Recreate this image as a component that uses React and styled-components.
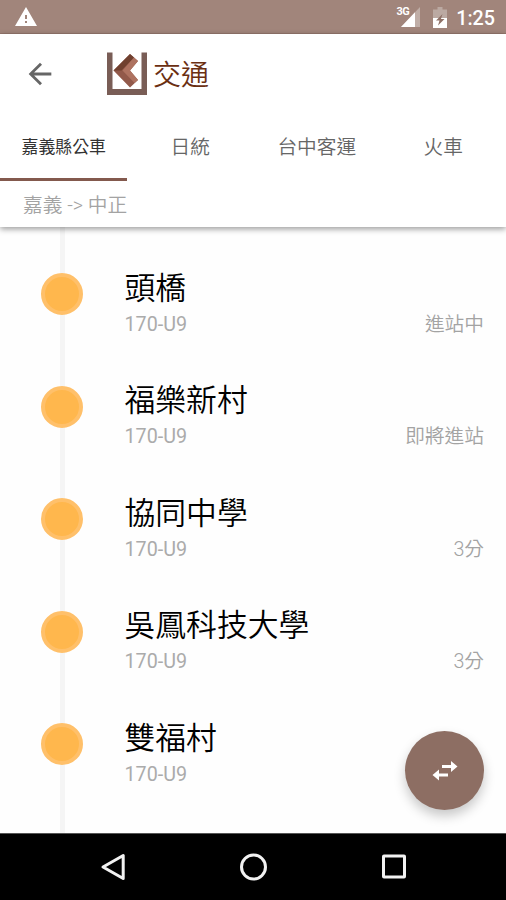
import React from "react";
import styled, { createGlobalStyle } from "styled-components";
import { MdArrowBack, MdWarning } from "react-icons/md";

const tabs = ["嘉義縣公車", "日統", "台中客運", "火車"];

const stops = [
  { name: "頭橋", bus: "170-U9", status: "進站中" },
  { name: "福樂新村", bus: "170-U9", status: "即將進站" },
  { name: "協同中學", bus: "170-U9", status: "3分" },
  { name: "吳鳳科技大學", bus: "170-U9", status: "3分" },
  { name: "雙福村", bus: "170-U9", status: "" },
];

const Logo = () => (
  <svg width="42" height="44" viewBox="0 0 42 44">
    <path d="M1 .5h5.500v36.500h29V.5H41v42.500H1z" fill="#795d56" />
    <path d="M24 2L32 9L24 18.500L32 28L24 35.500L7.500 18.500z" fill="#92594a" />
    <path d="M24 2L28 5.500L15.500 18.500H7.500z" fill="#70402f" />
    <path d="M28 5.500L32 9L24 18.500L32 28L28.500 31L16.500 18.500z" fill="#ae7260" />
  </svg>
);

const Signal = () => (
  <svg width="19" height="20" viewBox="0 0 19 20">
    <path d="M19 0v20H0z" fill="#c0aea7" />
    <path d="M14 5.300V20H0z" fill="#fff" />
  </svg>
);

const Battery = () => (
  <svg width="14" height="21" viewBox="0 0 14 21">
    <path d="M4.500 0h5v2.500H14V11H0V2.500h4.500z" fill="#bba9a2" />
    <path d="M0 11h14v10H0z" fill="#fff" />
    <path d="M9.500 7L3 13.500h3.500L5 18.500L11.500 12H8z" fill="#8f7167" />
  </svg>
);

const SwapIcon = () => (
  <svg width="26" height="20" viewBox="0 0 26 20" fill="#fff">
    <path d="M10 4h9V0l6.500 5.500L19 11V7h-9z" />
    <path d="M16 12.500H7v-4L.5 14L7 19.500v-4h9z" />
  </svg>
);

const App = () => {
  return (
    <Screen>
      <GlobalStyle />
      <StatusBar>
        <MdWarning size={24} />
        <StatusIcons>
          <Network>3G</Network>
          <Signal />
          <Battery />
          <Clock>1:25</Clock>
        </StatusIcons>
      </StatusBar>
      <Header>
        <Toolbar>
          <MdArrowBack size={34} />
          <Brand>
            <Logo />
            <h1>交通</h1>
          </Brand>
        </Toolbar>
        <Tabs>
          {tabs.map((tab, i) => (
            <Tab key={tab} $active={i === 0}>
              {tab}
            </Tab>
          ))}
        </Tabs>
        <Direction>嘉義 -&gt; 中正</Direction>
      </Header>
      <StopList>
        {stops.map((stop) => (
          <Stop key={stop.name}>
            <Track>
              <Dot />
            </Track>
            <StopInfo>
              <StopName>{stop.name}</StopName>
              <Detail>
                <span>{stop.bus}</span>
                <span>{stop.status}</span>
              </Detail>
            </StopInfo>
          </Stop>
        ))}
        <Fab>
          <SwapIcon />
        </Fab>
      </StopList>
      <NavBar>
        <svg width="28" height="30" viewBox="0 0 28 30">
          <path d="M24.200 3.500v23L4 15z" />
        </svg>
        <svg width="30" height="30" viewBox="0 0 30 30">
          <circle cx="14.500" cy="15" r="12" />
        </svg>
        <svg width="28" height="30" viewBox="0 0 28 30">
          <rect x="3.500" y="4" width="21" height="21" rx="0.500" />
        </svg>
      </NavBar>
    </Screen>
  );
};

export default App;

const GlobalStyle = createGlobalStyle`
  body {
    margin: 0;
    font-family: Roboto, "Noto Sans CJK TC", sans-serif;
  }
  * {
    box-sizing: border-box;
  }
  svg {
    display: block;
    flex-shrink: 0;
  }
`;

const Screen = styled.div`
  display: flex;
  flex-direction: column;
  width: 506px;
  height: 900px;
  overflow: hidden;
  background: #fefefe;
`;

const StatusBar = styled.div`
  display: flex;
  align-items: center;
  justify-content: space-between;
  height: 34px;
  padding: 1px 11px 0 14px;
  background: #a1857b;
  border-bottom: 1px solid #94766c;
  color: #fff;
`;

const StatusIcons = styled.div`
  display: flex;
  align-items: center;
  svg + svg {
    margin-left: 13px;
  }
`;

const Network = styled.span`
  align-self: flex-start;
  margin-right: -8px;
  font-size: 11px;
  line-height: 16px;
  font-weight: 700;
  letter-spacing: -0.5px;
`;

const Clock = styled.span`
  margin-left: 9px;
  padding-top: 3px;
  font-size: 19.7px;
  font-weight: 500;
  line-height: 24px;
`;

const Header = styled.div`
  position: relative;
  z-index: 1;
  height: 193px;
  background: #fff;
  box-shadow: 0 2px 6px rgb(0 0 0 / 40%);
`;

const Toolbar = styled.div`
  display: flex;
  align-items: center;
  height: 79px;
  padding-left: 23px;
  color: #666;
`;

const Brand = styled.div`
  display: flex;
  align-items: center;
  margin-left: 49px;
  h1 {
    margin: 0 0 0 5px;
    padding-top: 4px;
    color: #6b2f12;
    font-size: 28px;
    font-weight: 350;
    line-height: 40px;
  }
`;

const Tabs = styled.div`
  display: grid;
  grid-template-columns: repeat(4, 1fr);
  height: 68px;
`;

const Tab = styled.div`
  display: flex;
  align-items: center;
  justify-content: center;
  padding-left: 1px;
  border-bottom: 3px solid ${({ $active }) => ($active ? "#83594d" : "transparent")};
  color: ${({ $active }) => ($active ? "#333" : "#666")};
  font-size: ${({ $active }) => ($active ? "16.9px" : "19.7px")};
  font-weight: ${({ $active }) => ($active ? 400 : 350)};
`;

const Direction = styled.div`
  padding: 2px 0 0 23px;
  color: #a3a3a3;
  font-size: 19.7px;
  font-weight: 350;
  line-height: 46px;
`;

const StopList = styled.div`
  position: relative;
  flex: 1;
  padding-top: 11px;
  background: linear-gradient(#f5f5f5, #f5f5f5) 60px 0 / 5px 100% no-repeat;
`;

const Stop = styled.div`
  display: flex;
  height: 112.5px;
`;

const Track = styled.div`
  display: flex;
  align-items: center;
  justify-content: center;
  width: 124.5px;
`;

const Dot = styled.div`
  width: 42px;
  height: 42px;
  border: 4px solid #ffc06a;
  border-radius: 50%;
  background: #ffb74d;
`;

const StopInfo = styled.div`
  flex: 1;
  padding: 30.7px 22px 0 0;
`;

const StopName = styled.div`
  color: #000;
  font-size: 30.8px;
  font-weight: 350;
  line-height: 40px;
`;

const Detail = styled.div`
  display: flex;
  justify-content: space-between;
  margin-top: 4px;
  color: #ababab;
  font-size: 19.7px;
  line-height: 24px;
  span + span {
    color: #a3a3a3;
    font-weight: 350;
  }
`;

const Fab = styled.button`
  position: absolute;
  right: 22px;
  bottom: 23px;
  display: flex;
  align-items: center;
  justify-content: center;
  width: 79px;
  height: 79px;
  padding: 0;
  border: none;
  border-radius: 50%;
  background: #8d6e63;
  box-shadow: 0 6px 12px rgb(0 0 0 / 22%);
`;

const NavBar = styled.div`
  display: flex;
  align-items: center;
  justify-content: space-between;
  height: 67px;
  padding: 0 98px 0 99px;
  border-top: 1px solid #555;
  background: #000;
  svg {
    fill: none;
    stroke: #f2f2f2;
    stroke-width: 3;
    stroke-linejoin: round;
  }
`;
